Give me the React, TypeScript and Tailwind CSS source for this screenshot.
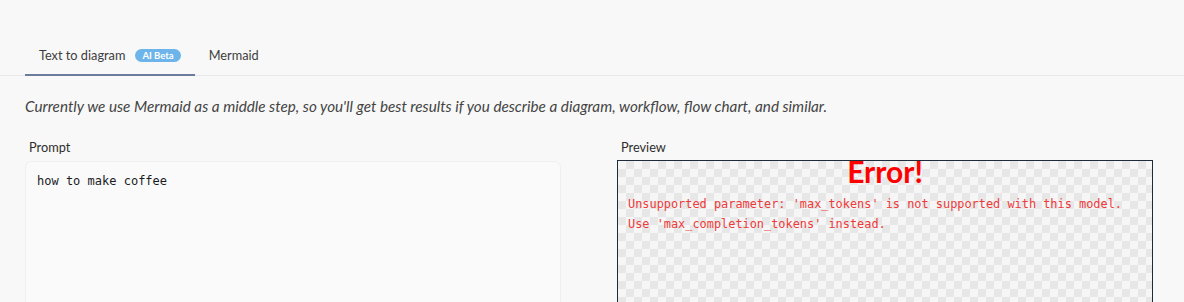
import React, { useState } from 'react'

const ui = { fontFamily: 'Lato, "Noto Sans", sans-serif' }
const mono = { fontFamily: '"DejaVu Sans Mono", "Liberation Mono", monospace' }

export default function App() {
  const [tab, setTab] = useState<'ttd' | 'mermaid'>('ttd')
  const [prompt, setPrompt] = useState('how to make coffee')

  return (
    <div className="w-[1184px] h-[302px] overflow-hidden bg-[#f8f8f8] text-[#1b1b1f]" style={ui}>
      <div className="pt-[37px]">
        {/* tabs */}
        <div className="flex pl-[25px] border-b border-[#e9e9ec]">
          <button
            onClick={() => setTab('ttd')}
            className={`flex items-center gap-[10px] h-[39px] px-[14px] text-[12.75px] border-b-2 -mb-px ${
              tab === 'ttd' ? 'border-[#6a7b9e]' : 'border-transparent'
            } text-[#3d3d3d]`}
          >
            Text to diagram
            <span className="rounded-full bg-[#6cb4ea] text-white text-[9.5px] font-bold leading-none px-[7px] py-[2px] h-[13px] flex items-center">
              AI Beta
            </span>
          </button>
          <button
            onClick={() => setTab('mermaid')}
            className={`h-[39px] px-[14px] text-[12.75px] border-b-2 -mb-px ${
              tab === 'mermaid' ? 'border-[#6a7b9e]' : 'border-transparent'
            } text-[#3d3d3d]`}
          >
            Mermaid
          </button>
        </div>

        <div className="pl-[25px] pr-[31px]">
          {/* intro */}
          <p className="mt-[20px] text-[15.25px] italic text-[#444] leading-[20px]">
            Currently we use Mermaid as a middle step, so you'll get best results if you describe a diagram, workflow,
            flow chart, and similar.
          </p>

          {/* panels */}
          <div className="mt-[22px] grid grid-cols-2 gap-[56px]">
            <div>
              <div className="pl-[4px] text-[12.75px] text-[#2e2e2e] leading-[18px]">Prompt</div>
              <textarea
                value={prompt}
                onChange={(e) => setPrompt(e.target.value)}
                className="mt-[5px] block w-full h-[200px] resize-none rounded-[6px] border border-[#f0f0f0] bg-[#fafafa] px-[11px] py-[10px] text-[12px] leading-[18px] text-[#1b1b1f] outline-none"
                style={mono}
              />
            </div>
            <div>
              <div className="pl-[4px] text-[12.75px] text-[#2e2e2e] leading-[18px]">Preview</div>
              <div className="mt-[4px] h-[200px] border-[1.5px] border-[#1f2a3a] bg-[conic-gradient(#e7e7e7_25%,#f6f6f6_0_50%,#e7e7e7_0_75%,#f6f6f6_0)] bg-[length:16px_16px]">
                <div className="text-center text-[30px] font-bold text-[#f00] leading-[22px] -mt-[1px]">Error!</div>
                <div className="mt-[12px] px-[10px] text-[11.9px] leading-[20px] text-[#ee3a3a]" style={mono}>
                  Unsupported parameter: 'max_tokens' is not supported with this model.
                  <br />
                  Use 'max_completion_tokens' instead.
                </div>
              </div>
            </div>
          </div>
        </div>
      </div>
    </div>
  )
}
